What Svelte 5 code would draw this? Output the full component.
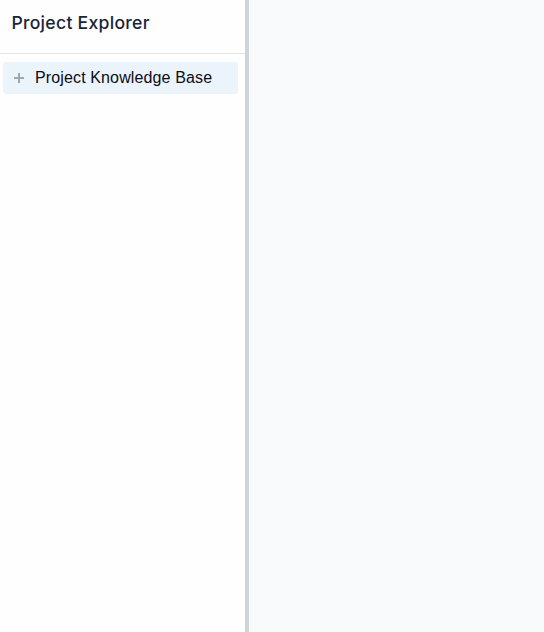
<script>
  const projects = ['Project Knowledge Base'];
</script>

<div class="layout">
  <aside>
    <header><h1>Project Explorer</h1></header>
    <nav>
      {#each projects as project}
        <div class="row">
          <svg width="10" height="10" viewBox="0 0 10 10" aria-hidden="true">
            <path d="M5 0V10M0 5H10" />
          </svg>
          <span>{project}</span>
        </div>
      {/each}
    </nav>
  </aside>
  <div class="divider"></div>
  <main></main>
</div>

<style>
  .layout {
    display: flex;
    height: 100vh;
    overflow: hidden;
    background: #f9fafc;
  }
  aside {
    box-sizing: border-box;
    width: 245px;
    flex: none;
    background: #fefefe;
  }
  header {
    box-sizing: border-box;
    height: 54px;
    padding: 9px 11px 0 11.4px;
    border-bottom: 1px solid #e2e4e8;
  }
  h1 {
    margin: 0;
    font: 550 17.6px/28px Inter, sans-serif;
    letter-spacing: 0.28px;
    color: #1a2438;
    white-space: nowrap;
  }
  nav {
    padding: 8px 7px 0 3px;
  }
  .row {
    display: flex;
    align-items: center;
    height: 32px;
    padding-left: 11px;
    gap: 11px;
    border-radius: 4px;
    background: #ebf3fb;
    font: 16px/24px "Liberation Sans", Arial, sans-serif;
    letter-spacing: 0.13px;
    color: #0d0d14;
    white-space: nowrap;
  }
  svg {
    flex: none;
  }
  path {
    stroke: #9ca8b0;
    stroke-width: 2;
    fill: none;
  }
  .divider {
    width: 4px;
    flex: none;
    background: #d0d3d9;
  }
  main {
    flex: 1;
    background: #f9fafc;
  }
</style>
